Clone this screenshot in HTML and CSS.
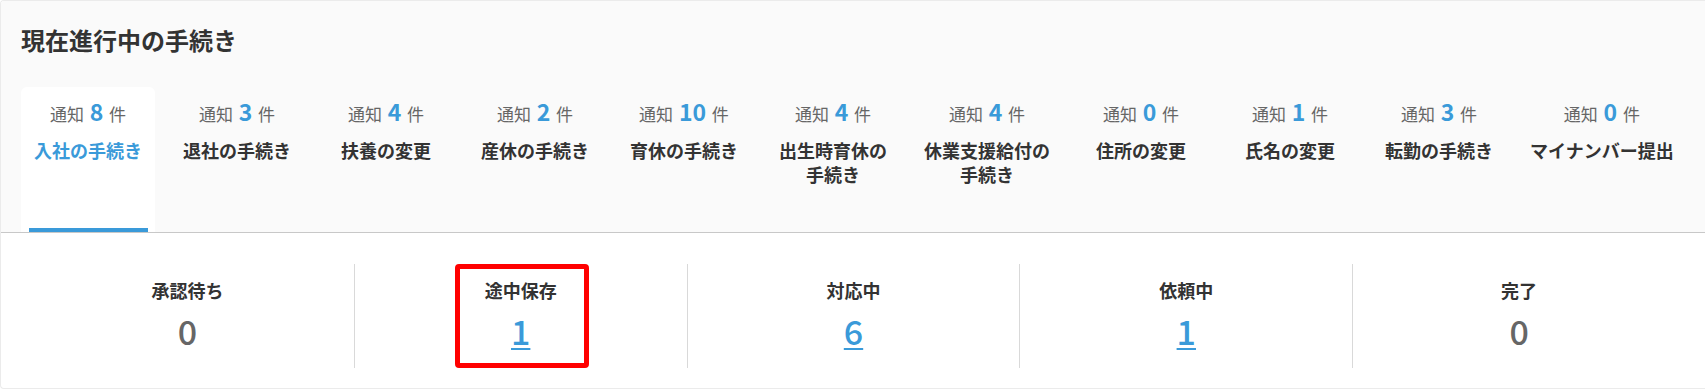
FILE: index.html
```html
<!DOCTYPE html>
<html>
<head>
<title>現在進行中の手続き</title>
<meta charset="UTF-8">
<meta name="viewport" content="width=device-width, initial-scale=1.0">

<link rel="stylesheet" href="styles.css">

</head>
<body>

<!-- *********************************************************
PROCEDURES
********************************************************** -->

<div class="card">
	<div class="card-top">
		<h2 class="card-title">現在進行中の手続き</h2>

		<div class="tabs">
			<div class="tab active">
				<div class="count">通知 <b>8</b> 件</div>
				<div class="label">入社の手続き</div>
			</div>
			<div class="tab">
				<div class="count">通知 <b>3</b> 件</div>
				<div class="label">退社の手続き</div>
			</div>
			<div class="tab">
				<div class="count">通知 <b>4</b> 件</div>
				<div class="label">扶養の変更</div>
			</div>
			<div class="tab">
				<div class="count">通知 <b>2</b> 件</div>
				<div class="label">産休の手続き</div>
			</div>
			<div class="tab">
				<div class="count">通知 <b>10</b> 件</div>
				<div class="label">育休の手続き</div>
			</div>
			<div class="tab">
				<div class="count">通知 <b>4</b> 件</div>
				<div class="label">出生時育休の<br>手続き</div>
			</div>
			<div class="tab">
				<div class="count">通知 <b>4</b> 件</div>
				<div class="label">休業支援給付の<br>手続き</div>
			</div>
			<div class="tab">
				<div class="count">通知 <b>0</b> 件</div>
				<div class="label">住所の変更</div>
			</div>
			<div class="tab">
				<div class="count">通知 <b>1</b> 件</div>
				<div class="label">氏名の変更</div>
			</div>
			<div class="tab">
				<div class="count">通知 <b>3</b> 件</div>
				<div class="label">転勤の手続き</div>
			</div>
			<div class="tab">
				<div class="count">通知 <b>0</b> 件</div>
				<div class="label">マイナンバー提出</div>
			</div>
		</div>
	</div>

	<div class="status">
		<div class="cell">
			<div class="cell-label">承認待ち</div>
			<div class="num">0</div>
		</div>
		<div class="cell">
			<span class="mark"></span>
			<div class="cell-label">途中保存</div>
			<a class="num link" href="#">1</a>
		</div>
		<div class="cell">
			<div class="cell-label">対応中</div>
			<a class="num link" href="#">6</a>
		</div>
		<div class="cell">
			<div class="cell-label">依頼中</div>
			<a class="num link" href="#">1</a>
		</div>
		<div class="cell">
			<div class="cell-label">完了</div>
			<div class="num">0</div>
		</div>
	</div>
</div>

</body>
</html>
```

FILE: styles.css
```css
body{
	margin: 0px;
	font-family: "Noto Sans CJK JP", "Noto Sans", sans-serif;
	color: #333;
	background: #fff;
}

/*********************************************************
CARD
**********************************************************/

.card{
	border: 1px solid #ebebeb;
	border-right: none;
	border-radius: 4px 0 0 4px;
	overflow: hidden;
	height: 389px;
	box-sizing: border-box;
}

.card-top{
	background: #fafafa;
	padding: 23px 20px 0 20px;
	border-bottom: 1px solid #c8c8c8;
}

.card-title{
	margin: 0;
	font-size: 24px;
	line-height: 32px;
	font-weight: 700;
	color: #333;
}

/*********************************************************
TABS
**********************************************************/

.tabs{
	display: flex;
	gap: 15px;
	margin-top: 31px;
}

.tab{
	position: relative;
	min-width: 134px;
	height: 145px;
	box-sizing: border-box;
	padding: 11px 9px 0 9px;
	text-align: center;
	border-radius: 6px 6px 0 0;
}

.tab.active{
	background: #fff;
}

.tab.active:after{
	content: '';
	position: absolute;
	left: 8px;
	right: 7px;
	bottom: 0px;
	height: 4px;
	background: #3a9ad9;
}

.count{
	font-size: 17px;
	line-height: 26px;
	color: #666;
}

.count b{
	font-size: 23px;
	font-weight: 700;
	color: #3a9ad9;
	margin: 0 2px;
}

.label{
	margin-top: 11px;
	font-size: 18px;
	line-height: 24px;
	font-weight: 700;
	color: #333;
	white-space: nowrap;
}

.tab.active .label{
	color: #3a9ad9;
}

/*********************************************************
STATUS
**********************************************************/

.status{
	display: grid;
	grid-template-columns: repeat(5, 1fr);
	padding: 31px 20px 0 20px;
	background: #fff;
}

.cell{
	position: relative;
	height: 104px;
	display: flex;
	flex-direction: column;
	align-items: center;
	padding-top: 14px;
	box-sizing: border-box;
}

.cell + .cell{
	border-left: 1px solid #d9d9d9;
}

.cell-label{
	font-size: 18px;
	line-height: 24px;
	font-weight: 700;
	color: #333;
}

.num{
	margin-top: 9px;
	font-size: 34px;
	line-height: 40px;
	font-weight: 500;
	color: #666;
}

.num.link{
	color: #3a9ad9;
	text-decoration: underline;
	text-decoration-thickness: 2px;
	text-underline-offset: 3px;
}

/* annotation frame */
.mark{
	position: absolute;
	top: 0px;
	bottom: 0px;
	left: 50%;
	width: 134px;
	margin-left: -66px;
	box-sizing: border-box;
	border: 5px solid #ff0000;
	border-radius: 4px;
}
```
